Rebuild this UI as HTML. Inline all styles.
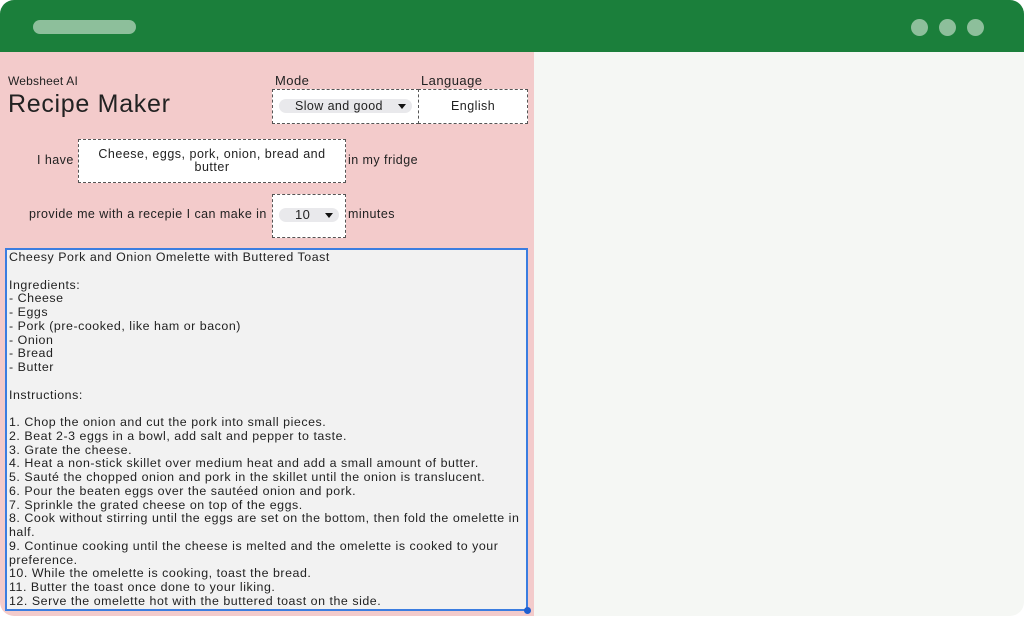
<!DOCTYPE html>
<html><head><style>
html,body{margin:0;padding:0;background:#fff;}
body{width:1024px;height:618px;overflow:hidden;font-family:"Liberation Sans",sans-serif;color:#222;}
.win{position:absolute;left:0;top:0;width:1024px;height:616px;border-radius:14px;overflow:hidden;background:#f5f7f4;}
.hdr{position:absolute;left:0;top:0;width:1024px;height:52px;background:#1b7f3b;}
.pill{position:absolute;left:33px;top:20px;width:103px;height:14px;border-radius:7px;background:#8dbf9b;}
.dot{position:absolute;top:19px;width:17px;height:17px;border-radius:50%;background:#8dbf9b;}
.pink{position:absolute;left:0;top:52px;width:534px;height:564px;background:#f3cbcb;}
.abs{position:absolute;white-space:nowrap;letter-spacing:0.45px;}
.box{position:absolute;background:#fff;border:1px dashed #555;box-sizing:border-box;}
.sel{position:absolute;background:#e9e9ec;border-radius:8px;height:14px;font-size:12.5px;line-height:14px;letter-spacing:0.4px;}
.tri{position:absolute;width:0;height:0;border-left:4px solid transparent;border-right:4px solid transparent;border-top:5px solid #111;}
.ta{position:absolute;left:5px;top:248px;width:523px;height:363px;box-sizing:border-box;border:2px solid #3b7de0;background:#f2f2f2;font-size:12.4px;line-height:13.75px;padding:1px 0 0 2px;color:#222;letter-spacing:0.54px;white-space:nowrap;overflow:hidden;}
</style></head><body>
<div class="win">
<div class="hdr"><div class="pill"></div>
<div class="dot" style="left:911px"></div><div class="dot" style="left:939px"></div><div class="dot" style="left:967px"></div></div>
<div class="pink"></div>
<div class="abs" style="left:8px;top:74px;font-size:12px;letter-spacing:0.2px;">Websheet AI</div>
<div class="abs" style="left:8px;top:90px;font-size:25px;letter-spacing:0.7px;">Recipe Maker</div>
<div class="abs" style="left:275px;top:73px;font-size:13px;">Mode</div>
<div class="abs" style="left:421px;top:73px;font-size:13px;">Language</div>
<div class="box" style="left:272px;top:89px;width:147px;height:35px;"></div>
<div class="box" style="left:418px;top:89px;width:110px;height:35px;"></div>
<div class="sel" style="left:279px;top:99px;width:133px;"><span style="position:absolute;left:16px;">Slow and good</span><div class="tri" style="left:119px;top:5px"></div></div>
<div class="abs" style="left:451px;top:99px;font-size:12.5px;">English</div>
<div class="abs" style="left:37px;top:153px;font-size:12.5px;">I have</div>
<div class="box" style="left:78px;top:139px;width:268px;height:44px;font-size:12.5px;line-height:13px;text-align:center;padding-top:8px;letter-spacing:0.5px;">Cheese, eggs, pork, onion, bread and<br>butter</div>
<div class="abs" style="left:348px;top:153px;font-size:12.5px;">in my fridge</div>
<div class="abs" style="left:29px;top:207px;font-size:12.5px;">provide me with a recepie I can make in</div>
<div class="box" style="left:272px;top:194px;width:74px;height:44px;"></div>
<div class="sel" style="left:279px;top:208px;width:60px;"><span style="position:absolute;left:16px;font-size:13px;">10</span><div class="tri" style="left:46px;top:5px"></div></div>
<div class="abs" style="left:348px;top:207px;font-size:12.5px;">minutes</div>
<div class="ta">Cheesy Pork and Onion Omelette with Buttered Toast<br><br>Ingredients:<br>- Cheese<br>- Eggs<br>- Pork (pre-cooked, like ham or bacon)<br>- Onion<br>- Bread<br>- Butter<br><br>Instructions:<br><br>1. Chop the onion and cut the pork into small pieces.<br>2. Beat 2-3 eggs in a bowl, add salt and pepper to taste.<br>3. Grate the cheese.<br>4. Heat a non-stick skillet over medium heat and add a small amount of butter.<br>5. Sauté the chopped onion and pork in the skillet until the onion is translucent.<br>6. Pour the beaten eggs over the sautéed onion and pork.<br>7. Sprinkle the grated cheese on top of the eggs.<br>8. Cook without stirring until the eggs are set on the bottom, then fold the omelette in<br>half.<br>9. Continue cooking until the cheese is melted and the omelette is cooked to your<br>preference.<br>10. While the omelette is cooking, toast the bread.<br>11. Butter the toast once done to your liking.<br>12. Serve the omelette hot with the buttered toast on the side.</div>
<div style="position:absolute;left:524px;top:607px;width:7px;height:7px;border-radius:50%;background:#1f5fd0;"></div>
</div>
</body></html>
